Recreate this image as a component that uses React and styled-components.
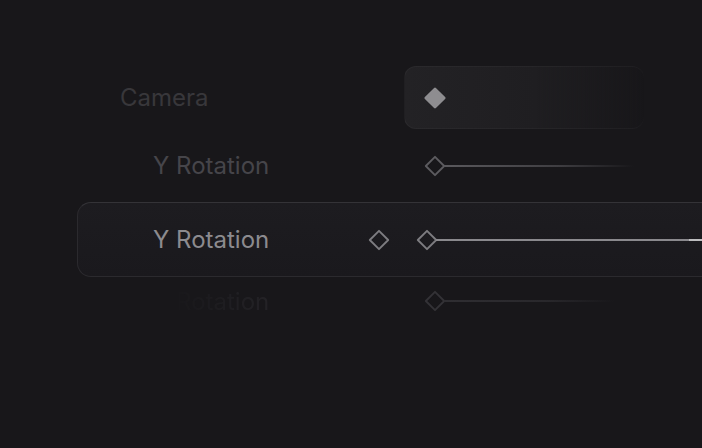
import React from "react";
import styled, { createGlobalStyle } from "styled-components";

const GlobalStyle = createGlobalStyle`
  html, body {
    margin: 0;
    padding: 0;
    background: #18171a;
    overflow: hidden;
  }
  body {
    font-family: Inter, "Noto Sans", sans-serif;
    -webkit-font-smoothing: antialiased;
  }
  * {
    box-sizing: border-box;
  }
`;

const Stage = styled.div`
  width: 702px;
  height: 448px;
  padding-top: 66px;
  display: flex;
  flex-direction: column;
  overflow: hidden;
`;

const GroupRow = styled.div`
  height: 63px;
  display: flex;
  align-items: center;
`;

const GroupLabel = styled.div`
  width: 404px;
  padding-left: 120px;
  font-size: 24px;
  color: #38373b;
`;

const GroupBox = styled.div`
  width: 240px;
  height: 63px;
  border-radius: 12px;
  padding-left: 19px;
  display: flex;
  align-items: center;
  background: linear-gradient(90deg, #232225 0%, #1f1e21 55%, rgba(24, 23, 26, 0) 100%);
  border: 1px solid rgba(255, 255, 255, 0.035);
  border-right: none;
`;

const Row = styled.div`
  height: ${({ h }) => h}px;
  display: flex;
  align-items: center;
`;

const ActiveRow = styled.div`
  height: 75px;
  margin-left: 77px;
  width: 680px;
  flex-shrink: 0;
  display: flex;
  align-items: center;
  border-radius: 14px;
  border: 1px solid #2b2a2e;
  border-top-color: #343337;
  background: linear-gradient(180deg, #1d1c20 0%, #1a191d 100%);
`;

const Label = styled.div`
  width: ${({ w }) => w}px;
  padding-left: ${({ pad }) => pad}px;
  flex-shrink: 0;
  font-size: 24px;
  color: ${({ color }) => color};
  ${({ masked }) =>
    masked &&
    `
    -webkit-mask-image: linear-gradient(90deg, rgba(0,0,0,0) 40%, rgba(0,0,0,1) 75%);
    mask-image: linear-gradient(90deg, rgba(0,0,0,0) 40%, rgba(0,0,0,1) 75%);
  `}
`;

const Track = styled.div`
  display: flex;
  align-items: center;
  flex-shrink: 0;
  width: ${({ w }) => w}px;
`;

const Line = styled.div`
  flex: 1;
  height: 2px;
  margin-left: -2px;
  background: ${({ bg }) => bg};
`;

const KeyButton = styled.div`
  width: 22px;
  display: flex;
  margin-right: 26px;
`;

const Diamond = ({ color, filled }) => (
  <svg width="22" height="22" viewBox="0 0 22 22" style={{ display: "block", flexShrink: 0 }}>
    <path
      d="M11 1.8 L20.2 11 L11 20.2 L1.8 11 Z"
      fill={filled ? color : "none"}
      stroke={color}
      strokeWidth={filled ? 2.6 : 1.9}
      strokeLinejoin="round"
    />
  </svg>
);

export default function App() {
  return (
    <>
      <GlobalStyle />
      <Stage>
        <GroupRow>
          <GroupLabel>Camera</GroupLabel>
          <GroupBox>
            <Diamond color="#8e8d90" filled />
          </GroupBox>
        </GroupRow>

        <Row h={73}>
          <Label w={424} pad={153} color="#46454a">
            Y Rotation
          </Label>
          <Track w={210}>
            <Diamond color="#5c5b5f" />
            <Line bg="linear-gradient(90deg, #5a595d 0%, #3f3e42 60%, rgba(24,23,26,0) 100%)" />
          </Track>
        </Row>

        <ActiveRow>
          <Label w={290} pad={75} color="#8c8b8f">
            Y Rotation
          </Label>
          <KeyButton>
            <Diamond color="#7d7c80" />
          </KeyButton>
          <Track w={320}>
            <Diamond color="#7d7c80" />
            <Line bg="linear-gradient(90deg, #8a898d 0%, #8a898d 84.5%, #bdbdbf 84.5%, #bdbdbf 100%)" />
          </Track>
        </ActiveRow>

        <Row h={48}>
          <Label w={424} pad={153} color="#2a292d" masked>
            Y Rotation
          </Label>
          <Track w={190}>
            <Diamond color="#333236" />
            <Line bg="linear-gradient(90deg, #2f2e32 0%, #29282c 60%, rgba(24,23,26,0) 100%)" />
          </Track>
        </Row>
      </Stage>
    </>
  );
}
